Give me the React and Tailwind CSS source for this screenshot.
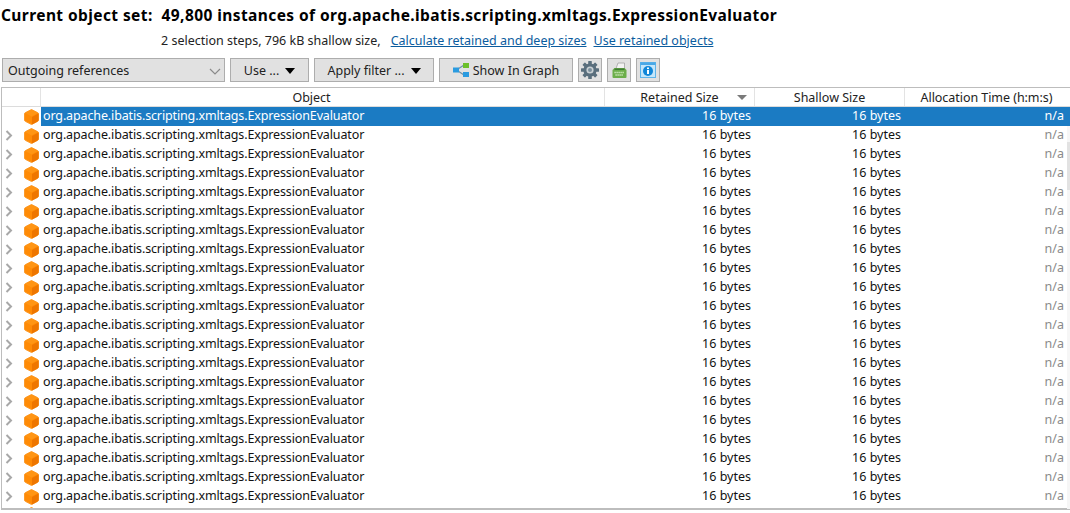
const NAME = "org.apache.ibatis.scripting.xmltags.ExpressionEvaluator";
const FONT = "font-['Noto_Sans','Open_Sans',sans-serif]";

function Cube() {
  return (
    <svg width="15" height="16" viewBox="0 0 15 16" className="shrink-0">
      <path d="M7.5 0.5 L13.5 3.6 Q14.5 4 14.5 5 V11 Q14.5 12 13.5 12.4 L7.5 15.5 L1.5 12.4 Q0.5 12 0.5 11 V5 Q0.5 4 1.5 3.6 Z" fill="#ff8b06" stroke="#fb9a2b" strokeWidth="1" strokeLinejoin="round" />
      <path d="M8 8 L14.5 4.6 V11 Q14.5 12 13.5 12.4 L8 15.4 Z" fill="#ee7600" />
      <path d="M7.5 0.8 L13.8 4 L7.5 7.5 L1.2 4 Z" fill="#ff9514" />
    </svg>
  );
}

function Chevron() {
  return (
    <svg width="8" height="11" viewBox="0 0 8 11">
      <path d="M1.5 1 L6 5.5 L1.5 10" fill="none" stroke="#a8a8a8" strokeWidth="2" />
    </svg>
  );
}

function Caret() {
  return <span className="w-0 h-0 border-x-[5px] border-x-transparent border-t-[6px] border-t-black" />;
}

function Row({ selected, first, iconOnly }) {
  return (
    <div className={`flex h-[19px] shrink-0 items-center text-[12.5px] ${selected ? "" : "text-[#111]"} ${iconOnly ? "pt-[1px] items-start" : ""}`}>
      <div className="w-[1px]" />
      <div className="w-[12px] flex justify-center">{!first && !iconOnly && <Chevron />}</div>
      <div className="w-[9px]" />
      <Cube />
      <div className={`flex flex-1 h-full items-center ${selected ? "bg-[#1b7bc3] text-white" : ""} ml-[2px]`}>
        {!iconOnly && (
          <>
            <div className="w-[2px]" />
            <div className="w-[562px] whitespace-nowrap leading-none tracking-[-0.13px]">{NAME}</div>
            <div className="w-[146px] text-right leading-none">16 bytes</div>
            <div className="w-[150px] text-right leading-none">16 bytes</div>
            <div className={`w-[163px] text-right leading-none ${selected ? "text-white" : "text-[#8a8a8a]"}`}>n/a</div>
          </>
        )}
      </div>
    </div>
  );
}

function Btn({ children, className }) {
  return (
    <div className={`h-[24px] pt-[2px] bg-[#e1e1e1] border border-[#adadad] flex items-center justify-center text-[12.5px] text-[#222] ${className}`}>
      {children}
    </div>
  );
}

function IconBtn({ children }) {
  return (
    <div className="h-[24px] w-[24px] bg-[#e1e1e1] border border-[#adadad] flex items-center justify-center">
      {children}
    </div>
  );
}

function Head({ className, children }) {
  return <div className={`h-full flex items-center justify-center pt-[3px] text-[12.5px] text-[#222] border-r border-[#e3e3e3] ${className}`}>{children}</div>;
}

export default function App() {
  return (
    <div className={`relative w-[1070px] h-[513px] bg-white overflow-hidden flex flex-col ${FONT}`}>
      <div className="h-[32px] pl-[1px] pt-[5px] text-[15.5px] leading-[20px] font-bold text-black whitespace-pre tracking-[0.41px]">
        Current object set:  49,800 instances of org.apache.ibatis.scripting.xmltags.ExpressionEvaluator
      </div>
      <div className="h-[26px] pl-[161px] text-[12.5px] leading-[18px] text-[#222] flex whitespace-pre">
        <span>2 selection steps, 796 kB shallow size,</span>
        <span className="ml-[10px] text-[#0b5c9e] underline">Calculate retained and deep sizes</span>
        <span className="ml-[7px] text-[#0b5c9e] underline">Use retained objects</span>
      </div>
      <div className="h-[24px] pl-[2px] flex gap-[5px]">
        <Btn className="w-[223px] !justify-between pl-[5px] pr-[3px]">
          <span>Outgoing references</span>
          <svg width="12" height="7" viewBox="0 0 12 7"><path d="M1 1 L6 6 L11 1" fill="none" stroke="#8a8a8a" strokeWidth="1.2" /></svg>
        </Btn>
        <Btn className="w-[79px] gap-[6px]"><span>Use ...</span><Caret /></Btn>
        <Btn className="w-[120px] gap-[6px]"><span>Apply filter ...</span><Caret /></Btn>
        <Btn className="w-[134px] gap-[4px]">
          <svg width="16" height="14" viewBox="0 0 16 14" className="-mt-[2px]">
            <path d="M5 6 L11 2 M5 8 L11 12" stroke="#6a8fa8" strokeWidth="1.2" />
            <rect x="0" y="4.5" width="6" height="5" fill="#2a9be0" />
            <rect x="10" y="0" width="6" height="5" fill="#6cc02a" />
            <rect x="10" y="9" width="6" height="5" fill="#2a9be0" />
          </svg>
          <span>Show In Graph</span>
        </Btn>
        <IconBtn>
          <svg width="18" height="18" viewBox="0 0 18 18">
            <g fill="#5a6f7d">
              <circle cx="9" cy="9" r="6.6" />
              <rect x="7.2" y="0" width="3.6" height="18" rx="0.6" />
              <rect x="0" y="7.2" width="18" height="3.6" rx="0.6" />
              <rect x="7.2" y="0" width="3.6" height="18" rx="0.6" transform="rotate(45 9 9)" />
              <rect x="7.2" y="0" width="3.6" height="18" rx="0.6" transform="rotate(-45 9 9)" />
            </g>
            <circle cx="9" cy="9" r="3.6" fill="#c9d0d4" />
            <circle cx="9" cy="9" r="2" fill="#7b8f9c" />
          </svg>
        </IconBtn>
        <IconBtn>
          <svg width="17" height="17" viewBox="0 0 17 17">
            <path d="M5 6.5 L7 1 H13.5 V6.5 Z" fill="#f2f2f2" stroke="#a3a3a3" strokeWidth="0.8" />
            <path d="M1.5 8 L3.5 6 H13.5 L15.5 8 V15 Q15.5 16 14.5 16 H2.5 Q1.5 16 1.5 15 Z" fill="#6cae4a" />
            <rect x="3.5" y="6.5" width="10" height="1.5" fill="#3f7c33" />
            <path d="M3.5 10.5 H13.5 M4.5 13 H12.5" stroke="#dcf2cc" strokeWidth="1.6" strokeDasharray="1.2 0.8" />
          </svg>
        </IconBtn>
        <IconBtn>
          <svg width="16" height="16" viewBox="0 0 16 16">
            <rect x="0.5" y="0.5" width="15" height="15" fill="#c4e6fa" stroke="#5db4ea" />
            <rect x="0.5" y="0.5" width="15" height="2.5" fill="#4aa8e6" />
            <circle cx="8" cy="9" r="5" fill="#0f86d8" />
            <rect x="7" y="8" width="2" height="4" fill="#fff" />
            <rect x="7" y="5.5" width="2" height="1.6" fill="#fff" />
          </svg>
        </IconBtn>
      </div>
      <div className="mt-[5px] ml-[1px] w-[1069px] h-[423px] border-t border-l border-b-2 border-[#bdbdbd] flex flex-col overflow-hidden">
        <div className="h-[18px] shrink-0 flex items-center border-b border-[#dcdcdc] box-content">
          <Head className="w-[39px]" />
          <Head className="w-[564px] pr-[22px]">Object</Head>
          <Head className="w-[150px] relative">
            Retained Size
            <span className="absolute right-[7px] top-[7px] w-0 h-0 border-x-[5px] border-x-transparent border-t-[5px] border-t-[#7a7a7a]" />
          </Head>
          <Head className="w-[150px]">Shallow Size</Head>
          <Head className="w-[165px] !border-r-0 pr-[2px] tracking-[-0.05px]">Allocation Time (h:m:s)</Head>
        </div>
        {Array.from({ length: 21 }).map((_, i) => (
          <Row key={i} selected={i === 0} first={i === 0} />
        ))}
        <Row iconOnly />
      </div>
      <div className="absolute right-0 top-[126px] bottom-[4px] w-[3px] bg-[#f6f6f6]">
        <div className="mt-[16px] h-[48px] bg-[#e2e2e2]" />
      </div>
    </div>
  );
}
